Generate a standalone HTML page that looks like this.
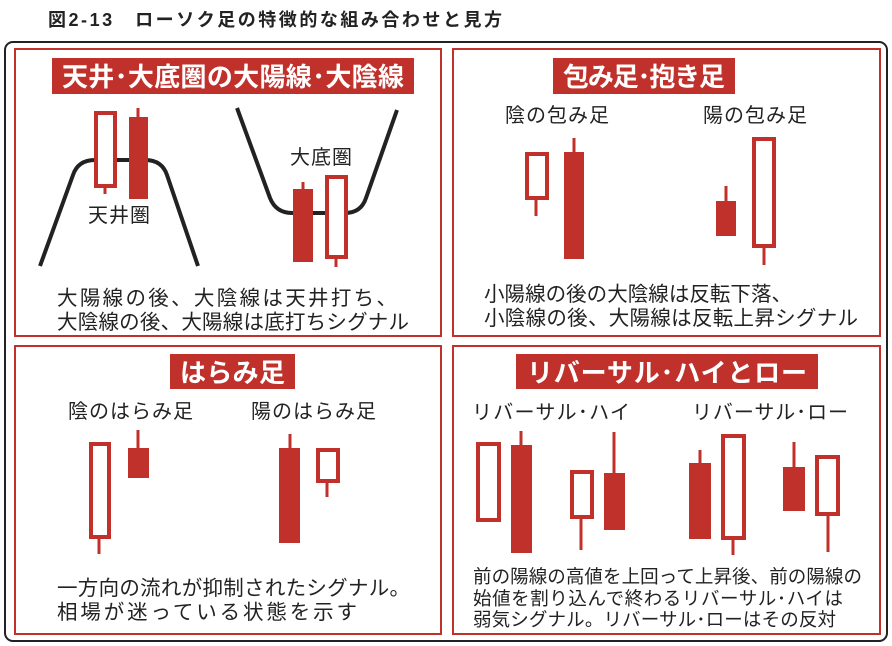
<!DOCTYPE html>
<html><head><meta charset="utf-8"><style>
html,body{margin:0;padding:0;background:#fff;}
svg{display:block;font-family:"Liberation Sans","Noto Sans CJK JP",sans-serif;}
</style></head><body>
<svg width="892" height="646" viewBox="0 0 892 646" xmlns="http://www.w3.org/2000/svg">
<text x="48" y="26" font-size="18" font-weight="bold" fill="#222" textLength="454">図2-13　ローソク足の特徴的な組み合わせと見方</text>
<rect x="5" y="42" width="882" height="599" rx="8" fill="none" stroke="#222" stroke-width="2"/>
<g fill="none" stroke="#c0312b" stroke-width="2">
<rect x="15" y="49" width="426" height="287"/>
<rect x="453" y="49" width="427" height="287"/>
<rect x="15" y="346" width="426" height="288"/>
<rect x="453" y="346" width="427" height="288"/>
</g>
<g fill="#c0312b">
<rect x="52" y="58" width="362" height="36"/>
<rect x="553" y="58" width="182" height="36"/>
<rect x="170" y="354" width="125" height="35"/>
<rect x="516" y="354" width="302" height="35"/>
</g>
<g fill="#fff" font-size="26" font-weight="bold">
<text x="62" y="86" textLength="342">天井･大底圏の大陽線･大陰線</text>
<text x="563" y="86" textLength="162">包み足･抱き足</text>
<text x="180" y="382" textLength="105">はらみ足</text>
<text x="527" y="382" textLength="280">リバーサル･ハイとロー</text>
</g>
<g fill="none" stroke="#222" stroke-width="4">
<path d="M40 266 L73 175 Q78 160 95 160 L145 160 Q162 160 167 175 L198 266"/>
<path d="M237 108 L270 198 Q276 213 292 213 L345 213 Q361 213 366 198 L397 110"/>
</g>
<g fill="#c0312b" stroke="#c0312b">
<g fill="#fff" stroke-width="4">
<rect x="96" y="113" width="19" height="73"/>
<rect x="327" y="177" width="19" height="80"/>
<rect x="527" y="154" width="20" height="44"/>
<rect x="754" y="139" width="20" height="107"/>
<rect x="91" y="444" width="18" height="93"/>
<rect x="318" y="450" width="20" height="31"/>
<rect x="478" y="444" width="21" height="76"/>
<rect x="572" y="472" width="20" height="45"/>
<rect x="723" y="436" width="21" height="102"/>
<rect x="817" y="457" width="21" height="57"/>
</g>
<g stroke-width="3">
<line x1="105" y1="188" x2="105" y2="194"/>
<line x1="138" y1="108" x2="138" y2="118"/>
<line x1="303" y1="182" x2="303" y2="190"/>
<line x1="336" y1="259" x2="336" y2="267"/>
<line x1="536" y1="200" x2="536" y2="216"/>
<line x1="574" y1="138" x2="574" y2="153"/>
<line x1="726" y1="186" x2="726" y2="202"/>
<line x1="764" y1="248" x2="764" y2="265"/>
<line x1="99" y1="539" x2="99" y2="554"/>
<line x1="138" y1="430" x2="138" y2="449"/>
<line x1="290" y1="434" x2="290" y2="449"/>
<line x1="327" y1="483" x2="327" y2="497"/>
<line x1="521" y1="431" x2="521" y2="446"/>
<line x1="581" y1="519" x2="581" y2="550"/>
<line x1="614" y1="432" x2="614" y2="474"/>
<line x1="700" y1="450" x2="700" y2="464"/>
<line x1="733" y1="540" x2="733" y2="555"/>
<line x1="794" y1="442" x2="794" y2="468"/>
<line x1="828" y1="516" x2="828" y2="552"/>
</g>
<g stroke="none">
<rect x="129" y="117" width="19" height="82"/>
<rect x="293" y="189" width="20" height="73"/>
<rect x="564" y="152" width="20" height="107"/>
<rect x="716" y="201" width="20" height="35"/>
<rect x="128" y="448" width="21" height="30"/>
<rect x="279" y="448" width="21" height="95"/>
<rect x="511" y="445" width="21" height="108"/>
<rect x="604" y="473" width="21" height="57"/>
<rect x="689" y="463" width="22" height="76"/>
<rect x="783" y="467" width="22" height="44"/>
</g>
</g>
<g fill="#222" font-size="20">
<text x="88" y="222" textLength="62">天井圏</text>
<text x="290" y="164" textLength="62">大底圏</text>
<text x="505" y="122" textLength="104">陰の包み足</text>
<text x="703" y="122" textLength="104">陽の包み足</text>
<text x="68" y="418" textLength="125">陰のはらみ足</text>
<text x="251" y="418" textLength="125">陽のはらみ足</text>
<text x="472" y="419" textLength="158">リバーサル･ハイ</text>
<text x="692" y="419" textLength="156">リバーサル･ロー</text>
</g>
<g fill="#222" font-size="20.5">
<text x="57" y="305" textLength="340">大陽線の後、大陰線は天井打ち、</text>
<text x="57" y="329" textLength="352">大陰線の後、大陽線は底打ちシグナル</text>
<text x="484" y="301" textLength="308">小陽線の後の大陰線は反転下落、</text>
<text x="484" y="325" textLength="374">小陰線の後、大陽線は反転上昇シグナル</text>
<text x="57" y="595" textLength="353">一方向の流れが抑制されたシグナル。</text>
<text x="57" y="619" textLength="300">相場が迷っている状態を示す</text>
</g>
<g fill="#222" font-size="18.5">
<text x="473" y="583" textLength="389">前の陽線の高値を上回って上昇後、前の陽線の</text>
<text x="473" y="605" textLength="370">始値を割り込んで終わるリバーサル･ハイは</text>
<text x="473" y="626" textLength="363">弱気シグナル。リバーサル･ローはその反対</text>
</g>
</svg>
</body></html>
